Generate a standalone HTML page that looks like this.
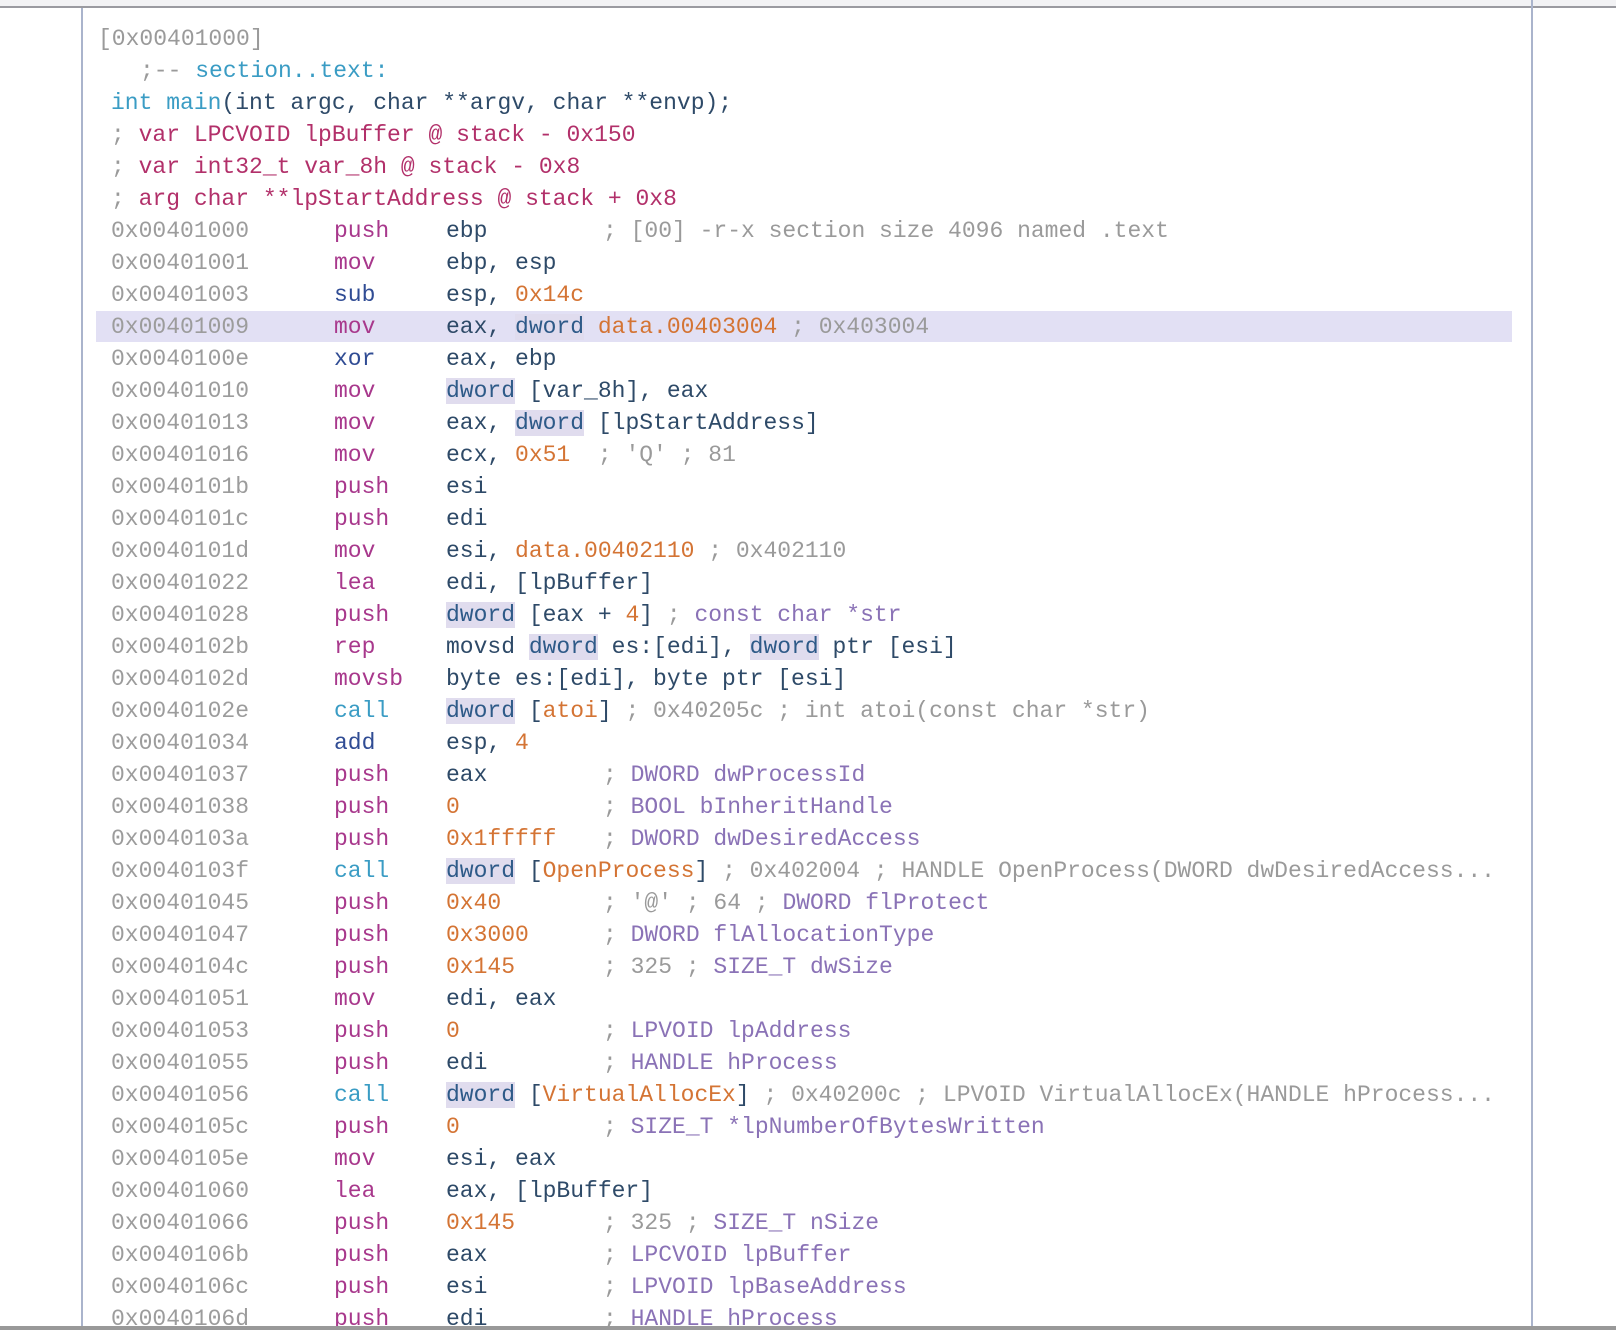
<!DOCTYPE html>
<html><head><meta charset="utf-8"><style>
html,body{margin:0;padding:0;width:1616px;height:1330px;overflow:hidden;background:#fff;position:relative}
.top{position:absolute;left:0;top:0;width:1616px;height:6px;background:#f2f2f4;border-bottom:2px solid #9a9aa0}
.lb{position:absolute;left:81px;top:8px;width:2px;height:1318px;background:#aab4cc}
.rb{position:absolute;left:1531px;top:0;width:2px;height:1326px;background:#aab4cc}
.bot{position:absolute;left:0;top:1326px;width:1616px;height:4px;background:#999}
.code{position:absolute;left:0;top:23px;font-family:"Liberation Mono",monospace;font-size:23px;line-height:32px;color:#2e4a68}
.r{position:relative;height:32px;width:1616px}
.r span{white-space:pre}
.hl{position:absolute;left:96px;top:0;width:1416px;height:31px;background:#e2e0f4}
.a{position:absolute;left:111px;color:#9c9c9c}
.m{position:absolute;left:334px;color:#a8388c}
.m.b{color:#3a9cc4}.m.n{color:#304c94}
.o{position:absolute;left:446px}
.c{position:absolute;left:603px;color:#9a9a9a}
.g{color:#9a9a9a}.t{color:#8a72b6}.n{color:#d47434}.d{background:#e0dcee;color:#2e5a88}
.red{color:#b2306a}.bl{color:#3a9cc4}
</style></head><body>
<div class="top"></div><div class="lb"></div><div class="rb"></div>
<div class="code"><div class="r"><span style="position:absolute;left:98px" class="g">[0x00401000]</span></div><div class="r"><span style="position:absolute;left:140px"><span class="g">;--</span> <span class="bl">section..text:</span></span></div><div class="r"><span style="position:absolute;left:111px"><span class="bl">int main</span>(int argc, char **argv, char **envp);</span></div><div class="r"><span style="position:absolute;left:111px" class="red"><span class="g">;</span> var LPCVOID lpBuffer @ stack - 0x150</span></div><div class="r"><span style="position:absolute;left:111px" class="red"><span class="g">;</span> var int32_t var_8h @ stack - 0x8</span></div><div class="r"><span style="position:absolute;left:111px" class="red"><span class="g">;</span> arg char **lpStartAddress @ stack + 0x8</span></div>
<div class="r"><span class="a">0x00401000</span><span class="m">push</span><span class="o">ebp</span><span class="c">; [00] -r-x section size 4096 named .text</span></div>
<div class="r"><span class="a">0x00401001</span><span class="m">mov</span><span class="o">ebp, esp</span></div>
<div class="r"><span class="a">0x00401003</span><span class="m n">sub</span><span class="o">esp, <span class="n">0x14c</span></span></div>
<div class="r"><div class="hl"></div><span class="a">0x00401009</span><span class="m">mov</span><span class="o">eax, <span class="d">dword</span> <span class="n">data.00403004</span> <span class="g">; 0x403004</span></span></div>
<div class="r"><span class="a">0x0040100e</span><span class="m n">xor</span><span class="o">eax, ebp</span></div>
<div class="r"><span class="a">0x00401010</span><span class="m">mov</span><span class="o"><span class="d">dword</span> [var_8h], eax</span></div>
<div class="r"><span class="a">0x00401013</span><span class="m">mov</span><span class="o">eax, <span class="d">dword</span> [lpStartAddress]</span></div>
<div class="r"><span class="a">0x00401016</span><span class="m">mov</span><span class="o">ecx, <span class="n">0x51</span>  <span class="g">; 'Q' ; 81</span></span></div>
<div class="r"><span class="a">0x0040101b</span><span class="m">push</span><span class="o">esi</span></div>
<div class="r"><span class="a">0x0040101c</span><span class="m">push</span><span class="o">edi</span></div>
<div class="r"><span class="a">0x0040101d</span><span class="m">mov</span><span class="o">esi, <span class="n">data.00402110</span> <span class="g">; 0x402110</span></span></div>
<div class="r"><span class="a">0x00401022</span><span class="m">lea</span><span class="o">edi, [lpBuffer]</span></div>
<div class="r"><span class="a">0x00401028</span><span class="m">push</span><span class="o"><span class="d">dword</span> [eax + <span class="n">4</span>] <span class="g">;</span> <span class="t">const char *str</span></span></div>
<div class="r"><span class="a">0x0040102b</span><span class="m">rep</span><span class="o">movsd <span class="d">dword</span> es:[edi], <span class="d">dword</span> ptr [esi]</span></div>
<div class="r"><span class="a">0x0040102d</span><span class="m">movsb</span><span class="o">byte es:[edi], byte ptr [esi]</span></div>
<div class="r"><span class="a">0x0040102e</span><span class="m b">call</span><span class="o"><span class="d">dword</span> [<span class="n">atoi</span>] <span class="g">; 0x40205c ; int atoi(const char *str)</span></span></div>
<div class="r"><span class="a">0x00401034</span><span class="m n">add</span><span class="o">esp, <span class="n">4</span></span></div>
<div class="r"><span class="a">0x00401037</span><span class="m">push</span><span class="o">eax</span><span class="c">; <span class="t">DWORD dwProcessId</span></span></div>
<div class="r"><span class="a">0x00401038</span><span class="m">push</span><span class="o n">0</span><span class="c">; <span class="t">BOOL bInheritHandle</span></span></div>
<div class="r"><span class="a">0x0040103a</span><span class="m">push</span><span class="o n">0x1fffff</span><span class="c">; <span class="t">DWORD dwDesiredAccess</span></span></div>
<div class="r"><span class="a">0x0040103f</span><span class="m b">call</span><span class="o"><span class="d">dword</span> [<span class="n">OpenProcess</span>] <span class="g">; 0x402004 ; HANDLE OpenProcess(DWORD dwDesiredAccess...</span></span></div>
<div class="r"><span class="a">0x00401045</span><span class="m">push</span><span class="o n">0x40</span><span class="c">; '@' ; 64 ; <span class="t">DWORD flProtect</span></span></div>
<div class="r"><span class="a">0x00401047</span><span class="m">push</span><span class="o n">0x3000</span><span class="c">; <span class="t">DWORD flAllocationType</span></span></div>
<div class="r"><span class="a">0x0040104c</span><span class="m">push</span><span class="o n">0x145</span><span class="c">; 325 ; <span class="t">SIZE_T dwSize</span></span></div>
<div class="r"><span class="a">0x00401051</span><span class="m">mov</span><span class="o">edi, eax</span></div>
<div class="r"><span class="a">0x00401053</span><span class="m">push</span><span class="o n">0</span><span class="c">; <span class="t">LPVOID lpAddress</span></span></div>
<div class="r"><span class="a">0x00401055</span><span class="m">push</span><span class="o">edi</span><span class="c">; <span class="t">HANDLE hProcess</span></span></div>
<div class="r"><span class="a">0x00401056</span><span class="m b">call</span><span class="o"><span class="d">dword</span> [<span class="n">VirtualAllocEx</span>] <span class="g">; 0x40200c ; LPVOID VirtualAllocEx(HANDLE hProcess...</span></span></div>
<div class="r"><span class="a">0x0040105c</span><span class="m">push</span><span class="o n">0</span><span class="c">; <span class="t">SIZE_T *lpNumberOfBytesWritten</span></span></div>
<div class="r"><span class="a">0x0040105e</span><span class="m">mov</span><span class="o">esi, eax</span></div>
<div class="r"><span class="a">0x00401060</span><span class="m">lea</span><span class="o">eax, [lpBuffer]</span></div>
<div class="r"><span class="a">0x00401066</span><span class="m">push</span><span class="o n">0x145</span><span class="c">; 325 ; <span class="t">SIZE_T nSize</span></span></div>
<div class="r"><span class="a">0x0040106b</span><span class="m">push</span><span class="o">eax</span><span class="c">; <span class="t">LPCVOID lpBuffer</span></span></div>
<div class="r"><span class="a">0x0040106c</span><span class="m">push</span><span class="o">esi</span><span class="c">; <span class="t">LPVOID lpBaseAddress</span></span></div>
<div class="r"><span class="a">0x0040106d</span><span class="m">push</span><span class="o">edi</span><span class="c">; <span class="t">HANDLE hProcess</span></span></div>
</div>
<div class="bot"></div>
</body></html>
